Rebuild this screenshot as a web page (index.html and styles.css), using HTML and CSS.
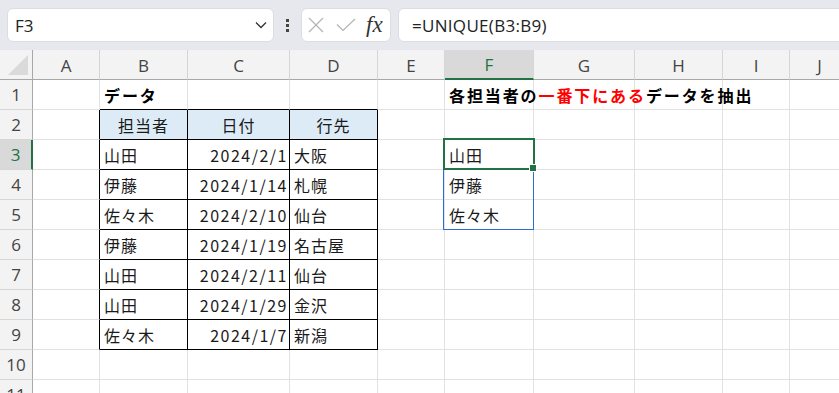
FILE: index.html
```html
<!DOCTYPE html>
<html>
<head>
    <title>UNIQUE</title>
    <link rel="stylesheet" href="styles.css">
</head>
<body>
    <div class="toolbar">
        <div class="name-box">
            <span>F3</span>
            <svg class="chevron" width="12" height="8" viewBox="0 0 12 8"><path d="M1 1.5 L6 6.5 L11 1.5" fill="none" stroke="#333" stroke-width="1.3"/></svg>
        </div>
        <div class="dots"><i></i><i></i><i></i></div>
        <div class="fx-box">
            <svg width="16" height="16" viewBox="0 0 16 16"><path d="M1 1 L15 15 M15 1 L1 15" stroke="#b4b4b4" stroke-width="1.2"/></svg>
            <svg width="20" height="14" viewBox="0 0 20 14"><path d="M1 6.5 L7 12.5 L19 1" fill="none" stroke="#b4b4b4" stroke-width="1.2"/></svg>
            <span class="fx">fx</span>
        </div>
        <div class="formula">=UNIQUE(B3:B9)</div>
    </div>

    <div class="sheet">
        <div class="hd corner"><span class="tri"></span></div>
        <div class="hd">A</div><div class="hd">B</div><div class="hd">C</div><div class="hd">D</div><div class="hd">E</div>
        <div class="hd sel-col">F</div><div class="hd">G</div><div class="hd">H</div><div class="hd">I</div><div class="hd">J</div>

        <div class="rh">1</div><div class="c"></div><div class="c b bold">データ</div><div class="c b"></div><div class="c b"></div><div class="c"></div>
        <div class="c bold over">各担当者の<span class="red">一番下にある</span>データを抽出</div><div class="c"></div><div class="c"></div><div class="c"></div><div class="c"></div>

        <div class="rh">2</div><div class="c tl"></div><div class="c t th">担当者</div><div class="c t th">日付</div><div class="c t th">行先</div><div class="c"></div><div class="c"></div><div class="c"></div><div class="c"></div><div class="c"></div><div class="c"></div>

        <div class="rh sel-row">3</div><div class="c tl"></div><div class="c t">山田</div><div class="c t num">2024/2/1</div><div class="c t">大阪</div><div class="c"></div><div class="c">山田</div><div class="c"></div><div class="c"></div><div class="c"></div><div class="c"></div>

        <div class="rh">4</div><div class="c tl"></div><div class="c t">伊藤</div><div class="c t num">2024/1/14</div><div class="c t">札幌</div><div class="c"></div><div class="c">伊藤</div><div class="c"></div><div class="c"></div><div class="c"></div><div class="c"></div>

        <div class="rh">5</div><div class="c tl"></div><div class="c t">佐々木</div><div class="c t num">2024/2/10</div><div class="c t">仙台</div><div class="c"></div><div class="c">佐々木</div><div class="c"></div><div class="c"></div><div class="c"></div><div class="c"></div>

        <div class="rh">6</div><div class="c tl"></div><div class="c t">伊藤</div><div class="c t num">2024/1/19</div><div class="c t">名古屋</div><div class="c"></div><div class="c"></div><div class="c"></div><div class="c"></div><div class="c"></div><div class="c"></div>

        <div class="rh">7</div><div class="c tl"></div><div class="c t">山田</div><div class="c t num">2024/2/11</div><div class="c t">仙台</div><div class="c"></div><div class="c"></div><div class="c"></div><div class="c"></div><div class="c"></div><div class="c"></div>

        <div class="rh">8</div><div class="c tl"></div><div class="c t">山田</div><div class="c t num">2024/1/29</div><div class="c t">金沢</div><div class="c"></div><div class="c"></div><div class="c"></div><div class="c"></div><div class="c"></div><div class="c"></div>

        <div class="rh">9</div><div class="c tl"></div><div class="c t">佐々木</div><div class="c t num">2024/1/7</div><div class="c t">新潟</div><div class="c"></div><div class="c"></div><div class="c"></div><div class="c"></div><div class="c"></div><div class="c"></div>

        <div class="rh">10</div><div class="c"></div><div class="c"></div><div class="c"></div><div class="c"></div><div class="c"></div><div class="c"></div><div class="c"></div><div class="c"></div><div class="c"></div><div class="c"></div>

        <div class="rh">11</div><div class="c"></div><div class="c"></div><div class="c"></div><div class="c"></div><div class="c"></div><div class="c"></div><div class="c"></div><div class="c"></div><div class="c"></div><div class="c"></div>

        <!-- spill range and active cell -->
        <div class="spill"></div>
        <div class="active"><span class="handle"></span></div>
    </div>
</body>
</html>
```

FILE: styles.css
```css
* {
    box-sizing: border-box;
}
body {
    margin: 0;
    padding: 0;
    width: 839px;
    height: 393px;
    overflow: hidden;
    background-color: #ffffff;
    font-family: "Noto Sans CJK JP", sans-serif;
}
.toolbar {
    height: 50px;
    background-color: #e6e8ed;
    display: flex;
    align-items: center;
    padding-left: 7px;
}
.name-box {
    width: 267px;
    height: 34px;
    background-color: #fff;
    border: 1px solid #dcdde2;
    border-radius: 6px;
    display: flex;
    align-items: center;
    justify-content: space-between;
    padding: 0 6px 0 7px;
    font-family: "Open Sans", sans-serif;
    font-size: 17px;
    color: #222;
}
.dots {
    width: 27px;
    display: flex;
    flex-direction: column;
    align-items: center;
    gap: 2px;
}
.dots i {
    display: block;
    width: 3px;
    height: 3px;
    background-color: #444;
}
.fx-box {
    width: 90px;
    height: 34px;
    background-color: #fff;
    border: 1px solid #dcdde2;
    border-radius: 6px;
    display: flex;
    align-items: center;
    gap: 12px;
    padding-left: 6px;
}
.fx {
    font-family: "Liberation Serif", serif;
    font-style: italic;
    font-size: 23px;
    line-height: 1;
    color: #333;
    margin-left: -2px;
    margin-top: -2px;
}
.formula {
    flex: 1;
    height: 34px;
    margin-left: 7px;
    margin-right: -10px;
    background-color: #fff;
    border: 1px solid #dcdde2;
    border-radius: 6px;
    display: flex;
    align-items: center;
    padding-left: 13px;
    font-family: "Open Sans", sans-serif;
    font-size: 17px;
    letter-spacing: 0.3px;
    color: #222;
}
.sheet {
    position: relative;
    display: grid;
    grid-template-columns: 33px 67px 88px 102px 88px 67px 89px 101px 88px 67px 60px;
    grid-template-rows: repeat(12, 30px);
}
.hd {
    background-color: #f3f3f3;
    border-right: 1px solid #d6d6d6;
    border-bottom: 1px solid #a8a8a8;
    display: flex;
    align-items: center;
    justify-content: center;
    font-family: "Open Sans", sans-serif;
    font-size: 17px;
    color: #444;
    padding-top: 1px;
}
.corner {
    position: relative;
    border-right: 1px solid #a8a8a8;
}
.tri {
    position: absolute;
    right: 4px;
    bottom: 4px;
    width: 0;
    height: 0;
    border-left: 20px solid transparent;
    border-bottom: 20px solid #dadada;
}
.sel-col {
    background-color: #d9d9d9;
    border-bottom: 2px solid #217346;
    color: #217346;
}
.rh {
    background-color: #f3f3f3;
    border-right: 1px solid #a8a8a8;
    border-bottom: 1px solid #d6d6d6;
    display: flex;
    align-items: center;
    justify-content: center;
    font-family: "Open Sans", sans-serif;
    font-size: 17px;
    color: #444;
}
.sel-row {
    background-color: #d9d9d9;
    border-right: 2px solid #217346;
    color: #217346;
}
.c {
    border-right: 1px solid #e1e1e1;
    border-bottom: 1px solid #e1e1e1;
    display: flex;
    align-items: center;
    padding-left: 4px;
    font-size: 16px;
    letter-spacing: 1px;
    color: #1a1a1a;
    white-space: nowrap;
}
.bold {
    font-weight: bold;
    letter-spacing: 1.9px;
    color: #000;
}
.over {
    overflow: visible;
    position: relative;
    z-index: 1;
}
.red {
    color: #ff0000;
}
.b {
    border-bottom-color: #000;
}
.tl {
    border-right-color: #000;
}
.t {
    border-right-color: #000;
    border-bottom-color: #000;
}
.th {
    background-color: #ddebf7;
    justify-content: center;
    padding-left: 0;
}
.num {
    justify-content: flex-end;
    padding-left: 0;
    padding-right: 1px;
    letter-spacing: 1.5px;
}
.spill {
    position: absolute;
    left: 443px;
    top: 88px;
    width: 91px;
    height: 92px;
    border: 1px solid #2f6bd0;
    pointer-events: none;
}
.active {
    position: absolute;
    left: 443px;
    top: 88px;
    width: 92px;
    height: 32px;
    border: 2px solid #217346;
    pointer-events: none;
}
.handle {
    position: absolute;
    right: -4px;
    bottom: -4px;
    width: 6px;
    height: 6px;
    background-color: #217346;
    border: 1px solid #fff;
    box-sizing: content-box;
}
```
